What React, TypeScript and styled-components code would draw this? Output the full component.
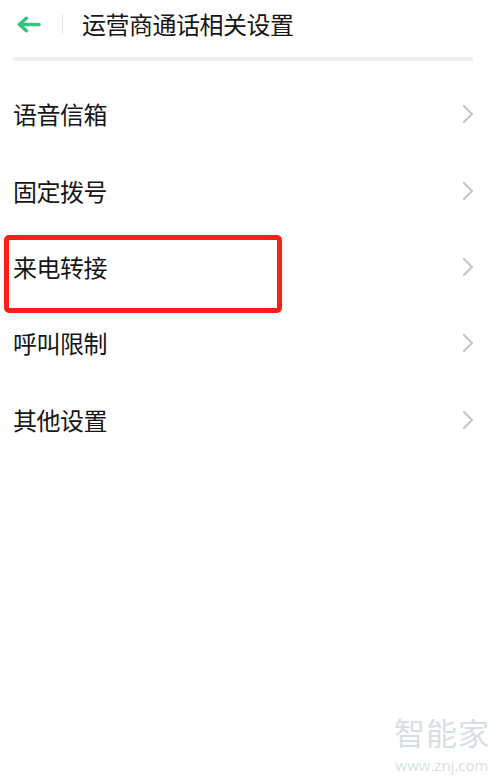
import styled, { createGlobalStyle } from "styled-components";

const GlobalStyle = createGlobalStyle`
  html, body {
    margin: 0;
    padding: 0;
    background: #ffffff;
  }
  body {
    font-family: "Noto Sans CJK SC", "Noto Sans", sans-serif;
    color: #1b1b1b;
  }
`;

const Page = styled.div`
  position: relative;
  width: 500px;
  height: 779px;
  overflow: hidden;
  background: #ffffff;
`;

const Header = styled.header`
  height: 48px;
  display: flex;
  align-items: center;
  padding-left: 17px;
`;

const BackButton = styled.div`
  width: 24px;
  height: 24px;
  display: flex;
  align-items: center;
  justify-content: center;
`;

const Divider = styled.div`
  width: 1px;
  height: 20px;
  background: #e4e4e4;
  margin: 0 19px 0 21px;
`;

const Title = styled.h1`
  margin: 0;
  font-size: 24px;
  font-weight: 400;
  line-height: 1;
  color: #161616;
  letter-spacing: -0.5px;
`;

const Rule = styled.div`
  height: 4px;
  margin: 9px 27px 0 13px;
  background: #efefef;
`;

const List = styled.ul`
  list-style: none;
  margin: 15px 0 0;
  padding: 0;
`;

const Row = styled.li`
  position: relative;
  height: 76.4px;
  display: flex;
  align-items: center;
  justify-content: space-between;
  padding: 0 26px 0 13px;
`;

const Label = styled.span`
  font-size: 24px;
  line-height: 1;
  color: #161616;
  letter-spacing: -0.5px;
`;

const Highlight = styled.div`
  position: absolute;
  left: 4px;
  top: 6px;
  width: 278px;
  height: 78px;
  box-sizing: border-box;
  border: 5px solid #fb1f17;
  border-radius: 5px;
  pointer-events: none;
`;

const Watermark = styled.div`
  position: absolute;
  right: 10px;
  bottom: 4px;
  display: flex;
  flex-direction: column;
  align-items: center;
  color: #d6dfe3;
`;

const MarkName = styled.div`
  font-size: 31px;
  line-height: 46px;
  letter-spacing: 1px;
`;

const MarkUrl = styled.div`
  font-family: "Open Sans", "Noto Sans", sans-serif;
  font-size: 15px;
  line-height: 20px;
`;

const Chevron = () => (
  <svg width="12" height="20" viewBox="0 0 12 20" fill="none">
    <path
      d="M2 2 L10 10 L2 18"
      stroke="#c6c6c6"
      strokeWidth="2.2"
      strokeLinecap="round"
      strokeLinejoin="round"
    />
  </svg>
);

const items = ["语音信箱", "固定拨号", "来电转接", "呼叫限制", "其他设置"];

export default function App() {
  return (
    <Page>
      <GlobalStyle />
      <Header>
        <BackButton>
          <svg width="25" height="17" viewBox="0 0 25 17" fill="none">
            <path
              d="M23 8.5 H3.5 M9.8 2 L2.5 8.5 L9.8 15"
              stroke="#35c27c"
              strokeWidth="3.6"
              strokeLinecap="round"
              strokeLinejoin="round"
            />
          </svg>
        </BackButton>
        <Divider />
        <Title>运营商通话相关设置</Title>
      </Header>
      <Rule />
      <List>
        {items.map((item) => (
          <Row key={item}>
            <Label>{item}</Label>
            <Chevron />
            {item === "来电转接" && <Highlight />}
          </Row>
        ))}
      </List>
      <Watermark>
        <MarkName>智能家</MarkName>
        <MarkUrl>www.znj.com</MarkUrl>
      </Watermark>
    </Page>
  );
}
